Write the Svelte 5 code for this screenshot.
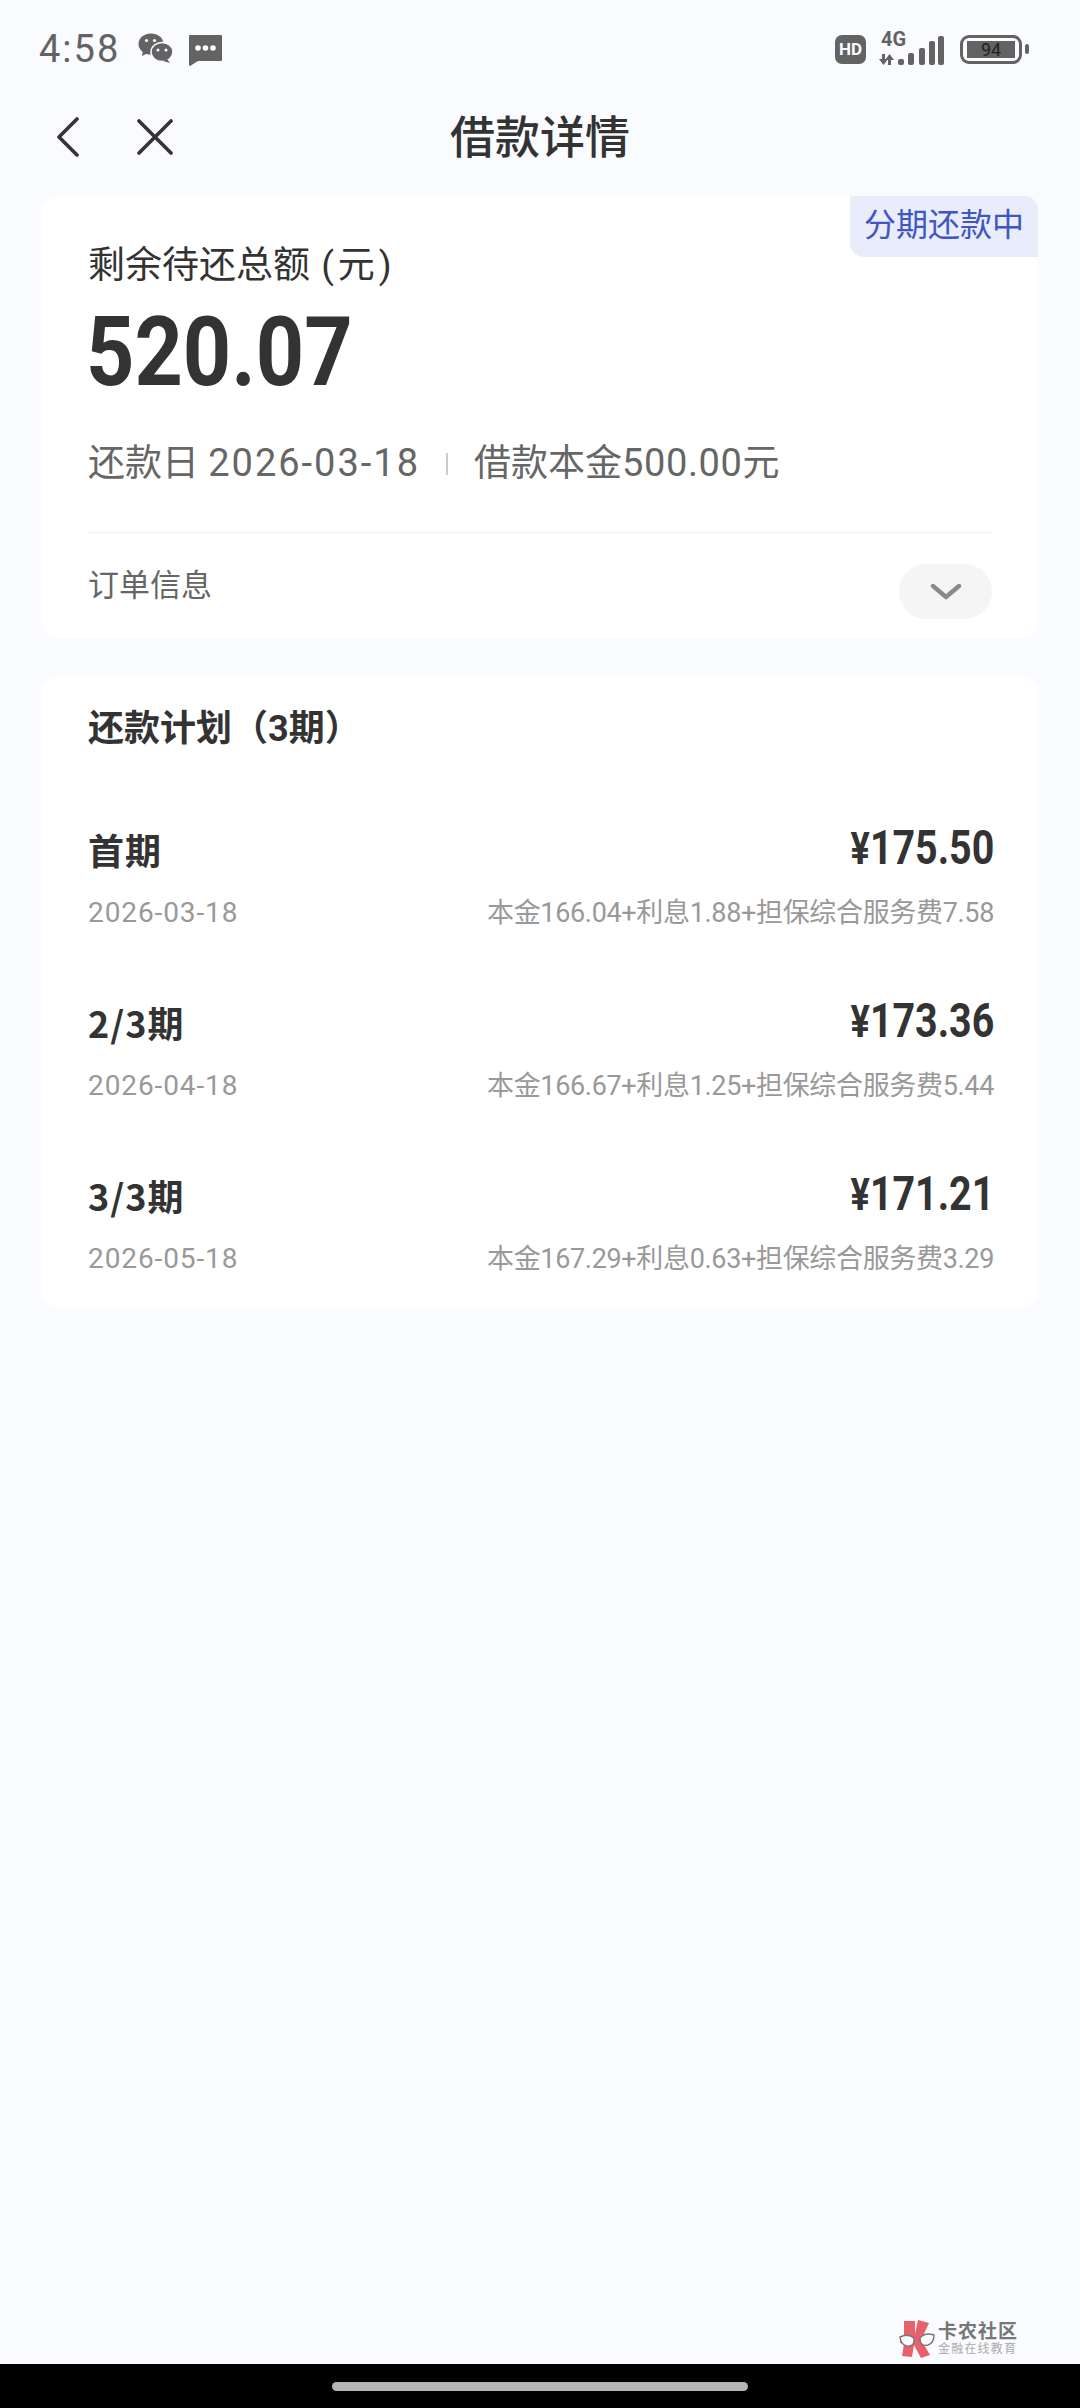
<script>
  const plan = [
    { name: '首期', amount: '175.50', date: '2026-03-18', detail: '本金166.04+利息1.88+担保综合服务费7.58' },
    { name: '2/3期', amount: '173.36', date: '2026-04-18', detail: '本金166.67+利息1.25+担保综合服务费5.44' },
    { name: '3/3期', amount: '171.21', date: '2026-05-18', detail: '本金167.29+利息0.63+担保综合服务费3.29' }
  ];
</script>

<div class="page">
  <div class="status">
    <div class="status-left">
      <span class="time">4:58</span>
      <svg class="wechat" width="36" height="32" viewBox="0 0 36 32">
        <ellipse cx="13" cy="11" rx="12.5" ry="10.5" fill="#636363" />
        <path d="M5 18l-1 5 6-3z" fill="#636363" />
        <ellipse cx="24" cy="19" rx="11" ry="9.5" fill="#636363" stroke="#fafbff" stroke-width="1.5" />
        <path d="M29 26l3 4-7-2z" fill="#636363" />
        <circle cx="8.5" cy="7.5" r="1.6" fill="#fafbff" />
        <circle cx="16.5" cy="7.5" r="1.6" fill="#fafbff" />
        <circle cx="20" cy="17" r="1.5" fill="#fafbff" />
        <circle cx="28" cy="17" r="1.5" fill="#fafbff" />
      </svg>
      <svg class="msg" width="33" height="31" viewBox="0 0 33 31">
        <path d="M1 0h31a1 1 0 0 1 1 1v24a1 1 0 0 1-1 1H9l-8 5a1 1 0 0 1-1-1V1a1 1 0 0 1 1-1z" fill="#636363" />
        <circle cx="9" cy="13" r="2.8" fill="#fafbff" />
        <circle cx="16.5" cy="13" r="2.8" fill="#fafbff" />
        <circle cx="24" cy="13" r="2.8" fill="#fafbff" />
      </svg>
    </div>
    <div class="status-right">
      <span class="hd">HD</span>
      <div class="net">
        <span class="fourg">4G</span>
        <svg width="66" height="32" viewBox="0 0 66 32">
          <path d="M3 21h3v5h3l-4.5 6L0 26h3zM12 32h-3v-5H6l4.5-6 4.5 6h-3z" fill="#636363" />
          <rect x="19" y="26" width="6" height="6" rx="2" fill="#636363" />
          <rect x="29" y="20" width="6" height="12" rx="2" fill="#636363" />
          <rect x="40" y="15" width="6" height="17" rx="2" fill="#636363" />
          <rect x="50" y="8" width="6" height="24" rx="2" fill="#636363" />
          <rect x="59" y="3" width="6" height="29" rx="2" fill="#636363" />
        </svg>
      </div>
      <div class="battery">
        <div class="battery-body"><span class="battery-fill">94</span></div>
        <span class="battery-tip"></span>
      </div>
    </div>
  </div>

  <div class="nav">
    <div class="nav-icons">
      <svg width="24" height="40" viewBox="0 0 24 40">
        <path d="M21 2L3 20l18 18" fill="none" stroke="#333" stroke-width="3.6" stroke-linecap="round" stroke-linejoin="round" />
      </svg>
      <svg width="36" height="36" viewBox="0 0 36 36">
        <path d="M2 2l32 32M34 2L2 34" fill="none" stroke="#333" stroke-width="3.6" stroke-linecap="round" />
      </svg>
    </div>
    <h1>借款详情</h1>
  </div>

  <section class="card summary">
    <span class="tag">分期还款中</span>
    <div class="label">剩余待还总额 <span class="unit">(元)</span></div>
    <div class="total">520.07</div>
    <div class="meta">
      <span>还款日 <span class="date-num">2026-03-18</span></span>
      <i class="sep"></i>
      <span>借款本金<span class="num">500.00</span>元</span>
    </div>
    <div class="order">
      <span class="order-label">订单信息</span>
      <span class="pill">
        <svg width="32" height="18" viewBox="0 0 32 18">
          <path d="M3 3l13 11L29 3" fill="none" stroke="#8a8a8a" stroke-width="4.4" stroke-linecap="round" stroke-linejoin="round" />
        </svg>
      </span>
    </div>
  </section>

  <section class="card schedule">
    <h2>还款计划（3期）</h2>
    {#each plan as row}
      <div class="row">
        <div class="row-top">
          <span class="row-name">{row.name}</span>
          <span class="amount"><small>¥</small>{row.amount}</span>
        </div>
        <div class="row-sub">
          <span class="date">{row.date}</span>
          <span class="detail">{row.detail}</span>
        </div>
      </div>
    {/each}
  </section>

  <div class="watermark">
    <svg width="36" height="38" viewBox="0 0 36 38">
      <path d="M5 1h11v13l3-14 11 3-6 13 9-1v5l-9 3 7 12-9 3-7-13-2 12-10-1 2-12-4-1v-6l4 1z" fill="#e8606c" />
      <path d="M1 17q8-4 14 1 1 9-7 8-6-1-7-9zM35 15q-9-3-14 3 0 9 8 7 6-2 6-10z" fill="#fafbff" stroke="#777" stroke-width="1.4" />
    </svg>
    <div class="wm-text">
      <strong>卡农社区</strong>
      <span>金融在线教育</span>
    </div>
  </div>

  <div class="navbar"><span class="home"></span></div>
</div>

<style>
  :global(body) {
    margin: 0;
    background: #fafbff;
  }

  .page {
    position: relative;
    width: 1080px;
    height: 2408px;
    background: #fafbff;
    color: #333;
    font-family: Roboto, "Noto Sans CJK SC", sans-serif;
    overflow: hidden;
  }

  .status {
    height: 98px;
    padding: 0 51px 0 39px;
    display: flex;
    justify-content: space-between;
    align-items: center;
    box-sizing: border-box;
  }

  .status-left,
  .status-right {
    display: flex;
    align-items: center;
  }

  .time {
    font-size: 38px;
    color: #636363;
    letter-spacing: 2px;
    margin-right: 18px;
  }

  .msg {
    margin-left: 15px;
    margin-top: 3px;
  }

  .hd {
    width: 31px;
    height: 29px;
    border-radius: 7px;
    background: #636363;
    color: #fafbff;
    font-size: 17px;
    font-weight: 700;
    display: flex;
    align-items: center;
    justify-content: center;
    margin-right: 13px;
  }

  .net {
    position: relative;
    width: 66px;
    height: 32px;
    margin-right: 15px;
  }

  .fourg {
    position: absolute;
    left: 2px;
    top: -4px;
    font-size: 20px;
    font-weight: 700;
    line-height: 20px;
    color: #636363;
  }

  .battery {
    display: flex;
    align-items: center;
    gap: 3px;
  }

  .battery-body {
    width: 62px;
    height: 29px;
    box-sizing: border-box;
    border: 3px solid #636363;
    border-radius: 9px;
    padding: 3px 4px;
    display: flex;
  }

  .battery-fill {
    flex: 1;
    background: #636363;
    color: #222;
    font-size: 18px;
    line-height: 17px;
    text-align: center;
  }

  .battery-tip {
    width: 4px;
    height: 10px;
    border-radius: 2px;
    background: #636363;
  }

  .nav {
    position: relative;
    height: 78px;
    display: flex;
    align-items: center;
    justify-content: center;
  }

  .nav-icons {
    position: absolute;
    left: 56px;
    top: 19px;
    display: flex;
    align-items: center;
    gap: 57px;
  }

  h1 {
    margin: 3px 0 0;
    font-size: 45px;
    font-weight: 500;
    line-height: 60px;
  }

  .card {
    margin: 20px 42px 0;
    background: #fff;
    border-radius: 16px;
    box-sizing: border-box;
  }

  .summary {
    position: relative;
    height: 442px;
    padding: 0 46px;
  }

  .tag {
    position: absolute;
    top: 0;
    right: 0;
    width: 188px;
    height: 61px;
    box-sizing: border-box;
    background: #e8ecfb;
    border-radius: 0 14px 0 14px;
    color: #3f56c4;
    font-size: 32px;
    line-height: 59px;
    text-align: center;
  }

  .label {
    padding-top: 45px;
    font-size: 37px;
    line-height: 50px;
  }

  .unit {
    letter-spacing: 4px;
    margin-left: 2px;
  }

  .total {
    margin-top: 11px;
    margin-left: -2px;
    font-size: 97px;
    font-weight: 700;
    line-height: 100px;
    transform: scaleX(0.87);
    transform-origin: left;
  }

  .meta {
    margin-top: 36px;
    display: flex;
    align-items: center;
    color: #666;
    font-size: 37px;
    line-height: 50px;
  }

  .date-num {
    font-size: 38px;
    letter-spacing: 2px;
  }

  .num {
    font-size: 38px;
    letter-spacing: 0.6px;
  }

  .sep {
    width: 2px;
    height: 22px;
    margin: 0 26px;
    background: #ccc;
  }

  .order {
    margin-top: 43px;
    height: 108px;
    border-top: 1px solid #eee;
    box-sizing: border-box;
    display: flex;
    justify-content: space-between;
    align-items: center;
    color: #666;
    font-size: 31px;
  }

  .order-label {
    margin-bottom: 9px;
  }

  .pill {
    width: 93px;
    height: 55px;
    margin-top: 10px;
    border-radius: 28px;
    background: #f5f5f5;
    display: flex;
    align-items: center;
    justify-content: center;
  }

  .schedule {
    margin-top: 38px;
    height: 632px;
    padding: 28px 44px 0 46px;
  }

  h2 {
    margin: 0 0 43px;
    font-size: 36px;
    font-weight: 700;
    line-height: 50px;
  }

  .row {
    height: 173px;
    box-sizing: border-box;
    padding-top: 20px;
  }

  .row-top,
  .row-sub {
    display: flex;
    justify-content: space-between;
    align-items: center;
  }

  .row-top {
    height: 60px;
  }

  .row-name {
    font-family: "Noto Sans CJK SC", sans-serif;
    font-size: 36px;
    font-weight: 700;
    letter-spacing: 1px;
    margin-top: 4px;
  }

  .amount {
    font-size: 48px;
    font-weight: 700;
    transform: scaleX(0.82);
    transform-origin: right;
  }

  .amount small {
    font-size: 44px;
  }

  .row-sub {
    margin-top: 16px;
    color: #999;
    font-size: 28px;
    line-height: 40px;
  }

  .date {
    letter-spacing: 0.9px;
  }

  .detail {
    font-size: 27px;
    letter-spacing: -0.33px;
  }

  .watermark {
    position: absolute;
    left: 899px;
    top: 2320px;
    display: flex;
    align-items: center;
    gap: 3px;
  }

  .wm-text {
    display: flex;
    flex-direction: column;
    color: #777;
    line-height: 1.15;
  }

  .wm-text strong {
    font-size: 19px;
    font-weight: 700;
    letter-spacing: 1px;
  }

  .wm-text span {
    font-size: 12px;
    color: #aaa;
    letter-spacing: 1.2px;
  }

  .navbar {
    position: absolute;
    left: 0;
    right: 0;
    bottom: 0;
    height: 44px;
    background: #000;
    display: flex;
    justify-content: center;
    align-items: center;
  }

  .home {
    width: 416px;
    height: 9px;
    border-radius: 5px;
    background: #b5b5b5;
  }
</style>
